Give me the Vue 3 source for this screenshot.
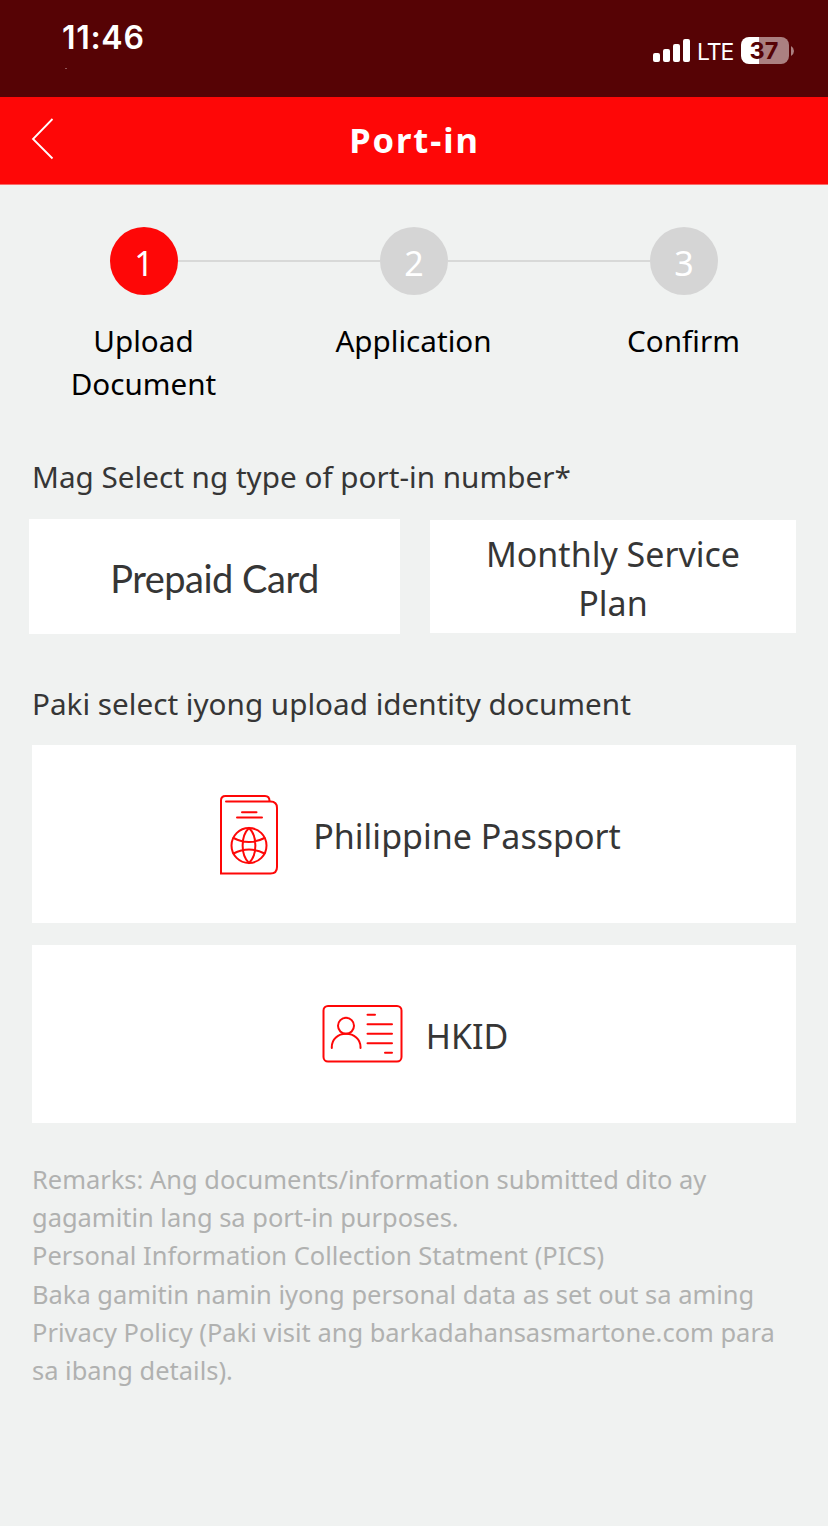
<script setup>
const steps = [
  { n: 1, label: 'Upload Document', active: true },
  { n: 2, label: 'Application', active: false },
  { n: 3, label: 'Confirm', active: false },
]
const remarks = [
  'Remarks: Ang documents/information submitted dito ay',
  'gagamitin lang sa port-in purposes.',
  'Personal Information Collection Statment (PICS)',
  'Baka gamitin namin iyong personal data as set out sa aming',
  'Privacy Policy (Paki visit ang barkadahansasmartone.com para',
  'sa ibang details).',
]
</script>

<template>
  <div class="screen">
    <div class="status">
      <div class="clock">11:46</div>
      <div class="indicators">
        <svg class="signal" width="38" height="24" viewBox="0 0 38 24" fill="#fff">
          <rect x="0" y="14" width="7" height="9" rx="2" />
          <rect x="10" y="10" width="7" height="13" rx="2" />
          <rect x="20" y="5" width="7" height="18" rx="2" />
          <rect x="30" y="0" width="7" height="23" rx="2" />
        </svg>
        <span class="network">LTE</span>
        <div class="battery"><span>37</span></div>
        <svg class="cap" width="3" height="10" viewBox="0 0 3 10"><path d="M0 0Q3 1.8 3 5T0 10Z" fill="#ab8081" /></svg>
      </div>
      <i class="tick"></i>
    </div>

    <header class="bar">
      <svg class="back" width="24" height="44" viewBox="0 0 24 44" fill="none" stroke="#fff" stroke-width="1.8">
        <path d="M21.500 2L2 22L21.500 41.500" />
      </svg>
      <h1>Port-in</h1>
    </header>

    <main>
      <ol class="steps">
        <li v-for="s in steps" :key="s.n" :class="{ active: s.active }">
          <span class="dot">{{ s.n }}</span>
          <span class="label">{{ s.label }}</span>
        </li>
      </ol>

      <h2>Mag Select ng type of port-in number*</h2>
      <div class="types">
        <button class="prepaid"><span>Prepaid Card</span></button>
        <button class="monthly"><span>Monthly Service<br>Plan</span></button>
      </div>

      <h2>Paki select iyong upload identity document</h2>
      <div class="docs">
        <button class="wide">
          <svg class="passport" width="60" height="82" viewBox="0 0 60 82" fill="none" stroke="#fe0707" stroke-width="2" stroke-linecap="round">
            <path d="M7 7.500H51.500Q58 7.500 58 14V73Q58 79.500 51.500 79.500H2V6.500Q2 2 6.500 2H46Q50.500 2 50.500 7" />
            <path d="M23 18.300H37.500M18 23.600H43" />
            <circle cx="30" cy="51.500" r="17.500" />
            <path d="M30 34C21.500 42 21.500 61 30 69C38.500 61 38.500 42 30 34ZM14.500 44Q30 52 45.500 44M14.500 59.500Q30 51.500 45.500 59.500" />
          </svg>
          <span>Philippine Passport</span>
        </button>
        <button class="narrow">
          <svg class="idcard" width="81" height="60" viewBox="0 0 81 60" fill="none" stroke="#fe0707" stroke-width="2" stroke-linecap="round">
            <rect x="1.500" y="2" width="78" height="55.500" rx="4.500" />
            <circle cx="24" cy="21.800" r="8" />
            <path d="M9.800 44V43C9.800 35 16 29.800 24 29.800S38.500 35 38.500 43V44M45.500 10.700H53M45.500 20.300H70M45.500 29.800H70M45.500 39.200H70M63 48.700H70" />
          </svg>
          <span>HKID</span>
        </button>
      </div>

      <p class="remarks"><span v-for="line in remarks" :key="line">{{ line }}</span></p>
    </main>
  </div>
</template>

<style>
body { background: #f0f2f1; }
</style>

<style scoped>
.screen {
  box-sizing: border-box;
  width: 828px;
  height: 1526px;
  overflow: hidden;
  background: #f0f2f1;
  color: #363636;
  font-family: "Noto Sans", "Open Sans", sans-serif;
}
.status {
  position: relative;
  box-sizing: border-box;
  display: flex;
  justify-content: space-between;
  height: 97px;
  padding: 17px 34px 0 62px;
  background: #560305;
  color: #fff;
}
.clock {
  margin-top: 1px;
  font: 600 32px/40px Inter, sans-serif;
  letter-spacing: 0.7px;
}
.indicators {
  display: flex;
  align-items: center;
  height: 28px;
  margin-top: 20px;
}
.network {
  width: 36px;
  margin: 2px 0 0 6px;
  font: 400 23px/28px Inter, sans-serif;
  letter-spacing: -1.1px;
  white-space: nowrap;
}
.battery {
  display: flex;
  align-items: center;
  justify-content: center;
  width: 48px;
  height: 27px;
  margin: -1px 0 0 8px;
  border-radius: 8px;
  background: linear-gradient(90deg, #fff 18px, #ab8081 18px);
  color: #560305;
  font: 700 23.500px/27px Inter, sans-serif;
}
.battery span { margin-left: -2px; }
.cap { margin-left: 2px; }
.tick {
  position: absolute;
  left: 65px;
  top: 68px;
  width: 2px;
  height: 1px;
  background: #8f5658;
}
.bar {
  display: grid;
  grid-template-columns: 32px 1fr 32px;
  align-items: center;
  height: 87px;
  margin-bottom: -1px;
  border-bottom: 1px solid #f96b6a;
  background: #fe0707;
}
.back {
  grid-area: 1 / 1;
  margin: -4px 0 0 31px;
  overflow: visible;
}
h1 {
  grid-area: 1 / 2;
  margin: -1px 0 0 1px;
  text-align: center;
  color: #fff;
  font-size: 34.500px;
  line-height: 48px;
  letter-spacing: 1.9px;
}
main { padding: 43px 32px 0; }
.steps {
  box-sizing: border-box;
  display: grid;
  grid-template-columns: repeat(3, 200px);
  justify-content: space-between;
  height: 229px;
  margin: 0;
  padding: 0 12px;
  list-style: none;
}
li {
  position: relative;
  display: flex;
  flex-direction: column;
  align-items: center;
}
li + li::before {
  content: "";
  position: absolute;
  top: 33px;
  right: 134px;
  width: 202px;
  height: 2px;
  background: #d8d9d8;
}
.dot {
  width: 68px;
  height: 68px;
  border-radius: 50%;
  background: #d5d5d5;
  color: #fff;
  font-size: 34px;
  line-height: 72px;
  text-align: center;
}
.active .dot { background: #fe0707; }
.label {
  width: 160px;
  margin: 25px 1px 0 0;
  color: #000;
  font-size: 29.650px;
  line-height: 42.500px;
  text-align: center;
}
h2 {
  margin: 0;
  font-size: 29.680px;
  font-weight: 400;
  line-height: 42px;
  white-space: nowrap;
}
.types {
  display: flex;
  align-items: center;
  justify-content: space-between;
  margin: 21px 0 49px -3px;
}
button {
  display: flex;
  align-items: center;
  justify-content: center;
  padding: 0;
  border: 0;
  background: #fff;
  color: #363636;
  font: 400 34px/49px "Noto Sans", "Open Sans", sans-serif;
}
.prepaid {
  width: 371px;
  height: 115px;
  font: 400 38px/49px Lato, sans-serif;
  letter-spacing: -0.500px;
}
.prepaid span { margin-top: 4px; }
.monthly { width: 366px; height: 113px; }
.monthly span { margin-top: 5px; }
.docs {
  display: grid;
  gap: 22px;
  margin-top: 20px;
}
.docs button { height: 178px; white-space: nowrap; }
.docs span { margin-top: 5px; }
.wide { padding-left: 12px; }
.narrow { padding-left: 2px; }
.passport { margin: 2px 34px 0 0; }
.idcard { margin-right: 23px; }
.remarks {
  margin: 37px 0 0;
  color: #b0b1b0;
  font-size: 25.460px;
  line-height: 38.200px;
  white-space: nowrap;
}
.remarks span { display: block; }
</style>
